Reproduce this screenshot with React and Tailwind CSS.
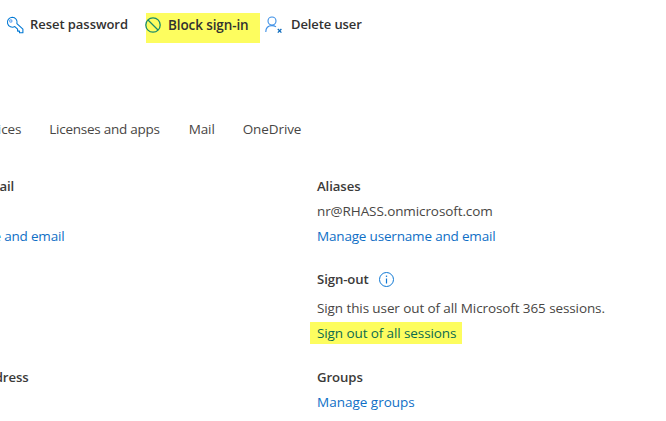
const font = { fontFamily: '"Open Sans", "Noto Sans", sans-serif' }

function KeyIcon() {
  return (
    <svg width="18" height="18" viewBox="0 0 18 18" fill="none" stroke="#0078d4" strokeWidth="1.1" className="shrink-0">
      <path d="M6.2 1.2a5 5 0 0 1 4.7 6.4l6 5.6v3.6h-3.4v-1.7h-1.9v-1.9L8.8 10.6A5 5 0 1 1 6.2 1.2Z" strokeLinejoin="round" />
      <circle cx="4.8" cy="5" r="1.2" stroke="#5ea0ef" />
    </svg>
  )
}

function BlockIcon() {
  return (
    <svg width="16" height="16" viewBox="0 0 16 16" fill="none" stroke="#1a8a6a" strokeWidth="1.3" className="-ml-px shrink-0">
      <circle cx="8" cy="8" r="7.2" />
      <path d="M3 3l10 10" />
    </svg>
  )
}

function DeleteUserIcon() {
  return (
    <svg width="18" height="18" viewBox="0 0 18 18" fill="none" stroke="#3a8ee6" strokeWidth="1.1" className="shrink-0">
      <circle cx="7" cy="5" r="4" />
      <path d="M0.8 16c0-3.8 2.4-6.4 6.2-6.4 1.6 0 3 .5 4 1.3" />
      <path d="M12.8 13l3.6 3.6M16.4 13l-3.6 3.6" stroke="#0f6cbd" strokeWidth="1.3" />
    </svg>
  )
}

function InfoIcon() {
  return (
    <svg width="15" height="15" viewBox="0 0 15 15" fill="none" stroke="#0f78d4" className="shrink-0">
      <circle cx="7.5" cy="7.5" r="7" />
      <path d="M7.5 6.5v5" strokeWidth="1.2" />
      <path d="M7.5 3.6v1.3" strokeWidth="1.3" />
    </svg>
  )
}

function Heading({ children, className = '' }) {
  return <h3 className={`text-[13.2px] leading-5 font-semibold text-[#3b3a39] ${className}`}>{children}</h3>
}

function Link({ children, className = 'tracking-[-0.18px]' }) {
  return <a className={`block text-[13.5px] leading-5 text-[#0f6fc6] ${className}`}>{children}</a>
}

export default function App() {
  return (
    <div style={font} className="h-[421px] w-[666px] overflow-hidden whitespace-nowrap bg-white tracking-[-0.1px] text-[#484644]">
      <div className="mt-[13px] flex h-[30px] pl-[6px] text-[13px] font-semibold text-[#323130]">
        <div className="flex items-center gap-[6px] pb-[6px]">
          <KeyIcon />
          <span className="tracking-[-0.05px]">Reset password</span>
        </div>
        <div className="ml-[18px] flex w-[114px] items-center gap-[7px] bg-[#fdfd5f] pb-[6px]">
          <BlockIcon />
          <span className="text-[13.5px]">Block sign-in</span>
        </div>
        <div className="ml-[5px] flex items-center gap-2 pb-[6px]">
          <DeleteUserIcon />
          <span>Delete user</span>
        </div>
      </div>

      <nav className="ml-[-26px] mt-[76px] flex gap-7 text-[13.5px] leading-5">
        <span>Devices</span>
        <span className="tracking-[-0.26px]">Licenses and apps</span>
        <span className="ml-px">Mail</span>
        <span>OneDrive</span>
      </nav>

      <div className="ml-[-114px] mt-[37px] grid grid-cols-[431px_1fr] gap-y-[23px]">
        <section>
          <Heading className="-ml-[2px]">Username and email</Heading>
          <div className="mt-[30px]">
            <Link>Manage username and email</Link>
          </div>
        </section>
        <section>
          <Heading>Aliases</Heading>
          <p className="mt-[5px] text-[13.5px] leading-5">nr@RHASS.onmicrosoft.com</p>
          <div className="mt-[5px]">
            <Link>Manage username and email</Link>
          </div>
          <div className="mt-[23px] flex items-center gap-[10px]">
            <Heading>Sign-out</Heading>
            <InfoIcon />
          </div>
          <p className="mt-[9px] text-[13.5px] leading-5">Sign this user out of all Microsoft 365 sessions.</p>
          <a className="-ml-[7px] mt-1 block h-[22px] w-[152px] bg-[#fdfd5f] pl-[7px] text-[13.5px] leading-[22px] text-[#0b6b50]">
            Sign out of all sessions
          </a>
        </section>
        <section>
          <Heading className="ml-[2px]">Primary email address</Heading>
        </section>
        <section>
          <Heading>Groups</Heading>
          <div className="mt-[5px]">
            <Link className="tracking-normal">Manage groups</Link>
          </div>
        </section>
      </div>
    </div>
  )
}
